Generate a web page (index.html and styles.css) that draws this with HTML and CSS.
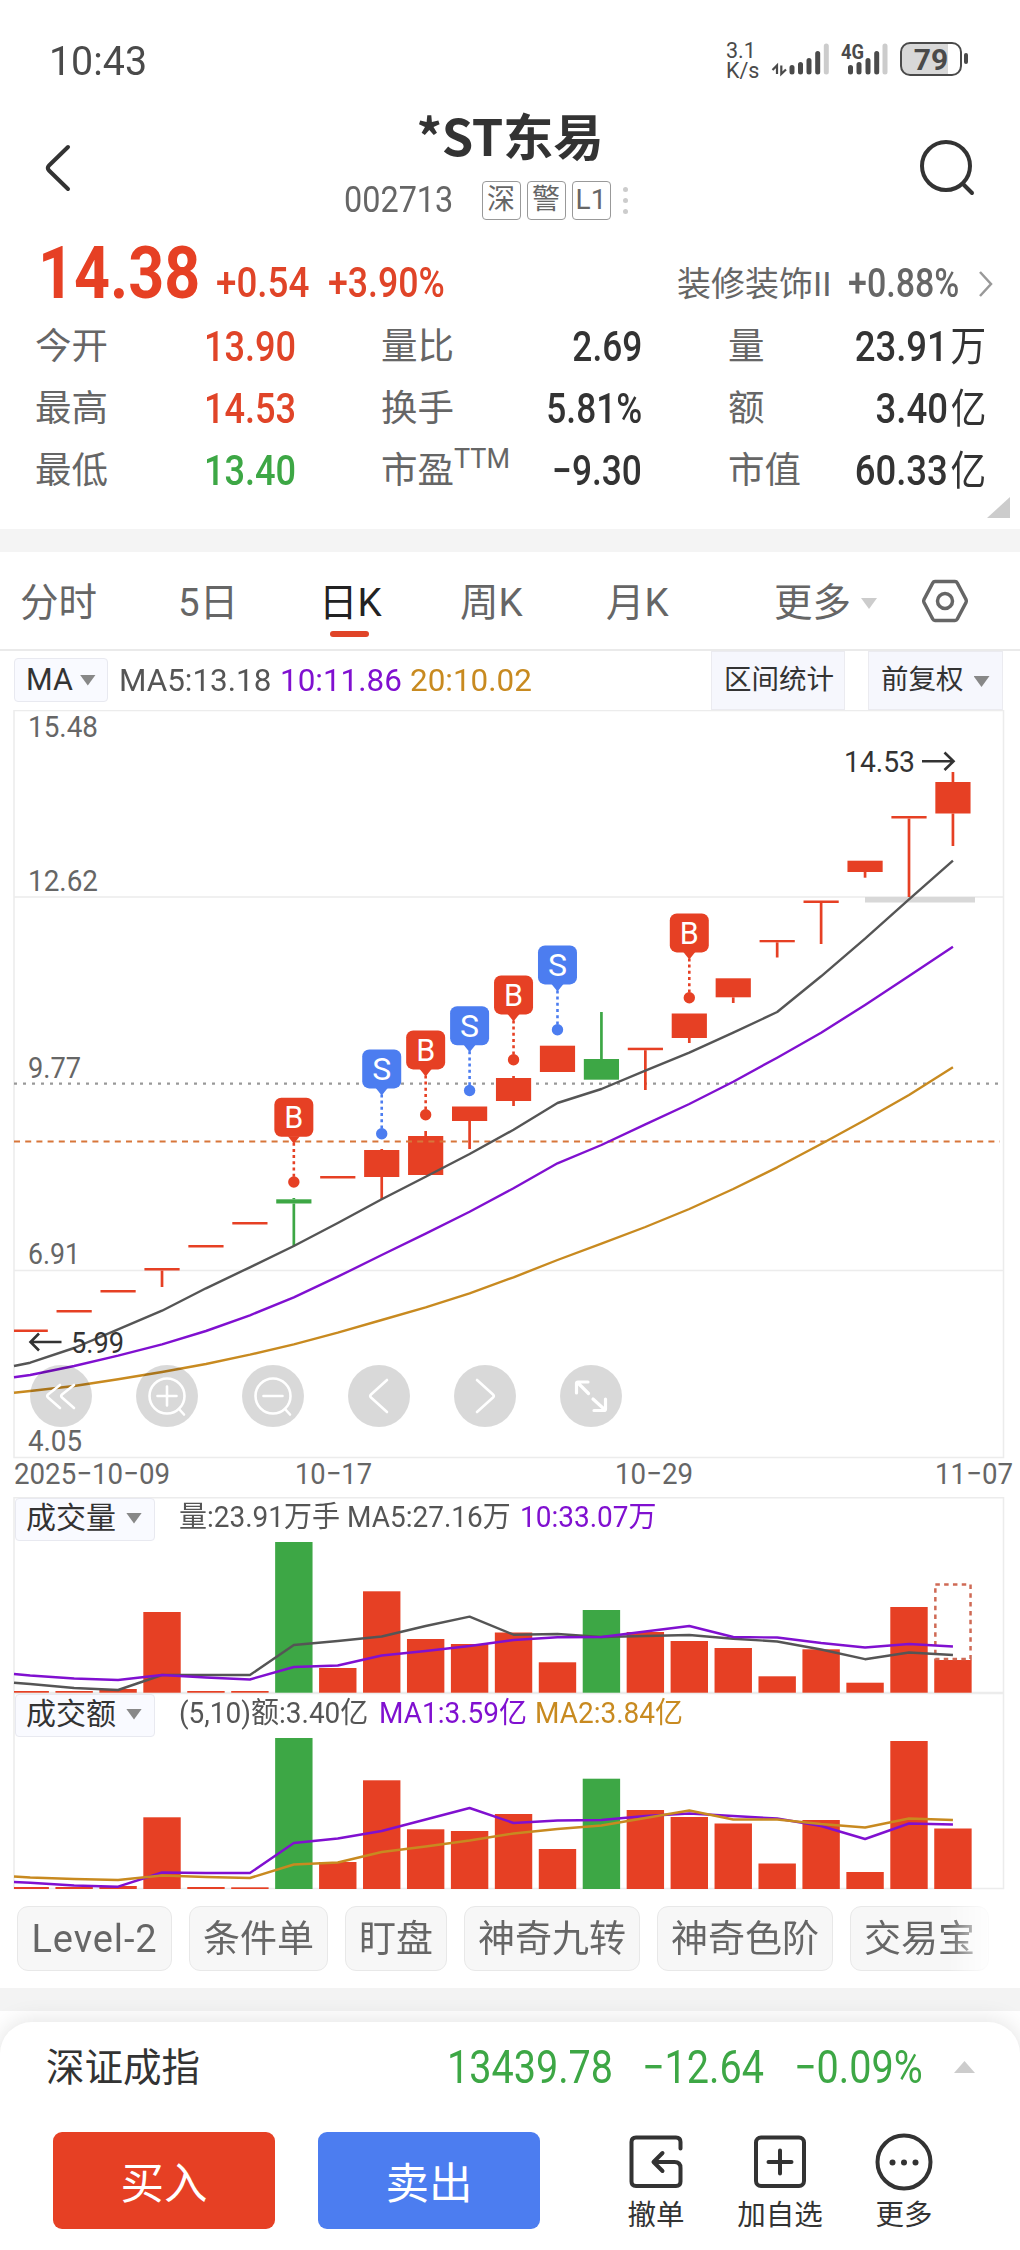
FILE: index.html
```html
<!DOCTYPE html>
<html lang="zh-CN">
<head>
<meta charset="utf-8">
<title>*ST东易 002713</title>
<link rel="stylesheet" href="styles.css">
</head>
<body>
<div class="page">
  <header class="status">
    <span class="clock">10:43</span>
    <div class="status-right">
      <div class="speed"><span>3.1</span><span>K/s</span></div>
      <svg class="signals" width="118" height="40" viewBox="768 38 118 40">
        <g stroke="#4a4a4a" stroke-width="5" stroke-linecap="round">
          <path d="M791 67.500V72M799.500 64.500V72M808 60.500V72M816.700 53.500V72M849.500 67.500V72M858 64.500V72M867 60.500V72M875.700 53.500V72"/>
          <path stroke="#ccc" d="M825.300 46V72M884 46V72"/>
        </g>
        <path fill="none" stroke="#4a4a4a" stroke-width="2.200" d="M771.500 70L776 65.500V74M780.300 65.500V74L785 69.500"/>
        <text x="840" y="59" class="net" textLength="23" lengthAdjust="spacingAndGlyphs">4G</text>
      </svg>
      <div class="battery"><span>79</span></div>
      <i class="battery-tip"></i>
    </div>
  </header>

  <div class="titlebar">
    <svg class="back" width="28" height="48" viewBox="0 0 28 48"><path d="M24 3L5 21.500Q2.500 24 5 26.500L24 45"/></svg>
    <div class="title">
      <h1>*ST东易</h1>
      <div class="sub">
        <span class="code">002713</span>
        <span class="tag">深</span><span class="tag">警</span><span class="tag">L1</span>
        <span class="dots"><i></i><i></i><i></i></span>
      </div>
    </div>
    <svg class="search" width="58" height="58" viewBox="0 0 58 58"><circle cx="27" cy="27" r="24"/><path d="M44 45L53 54"/></svg>
  </div>

  <div class="quote">
    <span class="price">14.38</span>
    <span class="chg">+0.54</span>
    <span class="chg pct">+3.90%</span>
    <span class="sector">装修装饰II</span>
    <span class="sector-pct">+0.88%</span>
    <svg width="16" height="28" viewBox="0 0 16 28"><path d="M2 2L13 14L2 26"/></svg>
  </div>

  <div class="stats">
    <span class="k">今开</span><b class="open red">13.90</b><span class="k">量比</span><b class="mid">2.69</b><span class="k">量</span><b>23.91<em>万</em></b>
    <span class="k">最高</span><b class="open red">14.53</b><span class="k">换手</span><b class="mid">5.81%</b><span class="k">额</span><b>3.40<em>亿</em></b>
    <span class="k">最低</span><b class="open green">13.40</b><span class="k">市盈<sup>TTM</sup></span><b class="mid">−9.30</b><span class="k">市值</span><b>60.33<em>亿</em></b>
  </div>
  <div class="expand"><i></i></div>
  <div class="band"></div>

  <nav class="tabs">
    <span>分时</span><span>5日</span><span class="on">日K</span><span>周K</span><span>月K</span><span class="more">更多<i class="tri light"></i></span>
    <svg width="48" height="46" viewBox="0 0 48 46"><path d="M14 3.500H34Q35.500 3.500 36.300 5L45 21.500Q45.700 23 45 24.500L36.300 41Q35.500 42.500 34 42.500H14Q12.500 42.500 11.700 41L3 24.500Q2.300 23 3 21.500L11.700 5Q12.500 3.500 14 3.500Z"/><circle cx="24" cy="23" r="7.500"/></svg>
  </nav>

  <div class="toolbar">
    <span class="pick">MA<i class="tri"></i></span>
    <span class="ma">MA5:13.18</span><span class="ma purple">10:11.86</span><span class="ma gold">20:10.02</span>
    <span class="opt range">区间统计</span>
    <span class="opt adj">前复权<i class="tri"></i></span>
  </div>

  <section class="panel">
    <svg id="kline" width="1020" height="787" viewBox="0 710 1020 787"></svg>
    <div class="controls">
      <span><svg viewBox="0 0 62 62"><path d="M30 20L18 29.500Q16.500 31 18 32.500L30 43M44 20L32 29.500Q30.500 31 32 32.500L44 43"/></svg></span>
      <span><svg viewBox="0 0 62 62"><circle cx="31" cy="31" r="17.500"/><path d="M21.500 31H40.500M31 21.500V40.500M43 44L48 49.500"/></svg></span>
      <span><svg viewBox="0 0 62 62"><circle cx="31" cy="31" r="17.500"/><path d="M21.500 31H40.500M43 44L48 49.500"/></svg></span>
      <span><svg viewBox="0 0 62 62"><path d="M39 15L23 29.500Q21.500 31 23 32.500L39 47"/></svg></span>
      <span><svg viewBox="0 0 62 62"><path d="M23 15L39 29.500Q40.500 31 39 32.500L23 47"/></svg></span>
      <span><svg viewBox="0 0 62 62"><path stroke-width="3.200" d="M16.500 28V18.500Q16.500 17 18 17H28M18 18L28.500 28.500M45.500 34V44Q45.500 45.500 44 45.500H34M44 44L33 34"/></svg></span>
    </div>
  </section>

  <section class="panel">
    <svg id="volume" width="1020" height="196" viewBox="0 1497 1020 196"></svg>
    <div class="panel-head"><span class="pick2">成交量<i class="tri"></i></span>
      <span class="legend v1">量:23.91万手</span><span class="legend v2">MA5:27.16万</span><span class="legend purple v3">10:33.07万</span></div>
  </section>
  <section class="panel">
    <svg id="amount" width="1020" height="197" viewBox="0 1693 1020 197"></svg>
    <div class="panel-head"><span class="pick2">成交额<i class="tri"></i></span>
      <span class="legend a1">(5,10)额:3.40亿</span><span class="legend purple a2">MA1:3.59亿</span><span class="legend gold a3">MA2:3.84亿</span></div>
  </section>

  <div class="pills">
    <span class="w155">Level-2</span><span class="w139">条件单</span><span class="w102">盯盘</span><span class="w176">神奇九转</span><span class="w176">神奇色阶</span><span class="w139">交易宝</span>
  </div>
  <div class="band low"></div>

  <footer class="sheet">
    <div class="index">
      <span class="name">深证成指</span><span class="iv">13439.78</span><span class="iv">−12.64</span><span class="iv">−0.09%</span><i class="up"></i>
    </div>
    <div class="actions">
      <button class="buy">买入</button><button class="sell">卖出</button>
      <div class="act"><svg viewBox="0 0 60 60"><path d="M54.500 16.500V10Q54.500 5.500 50 5.500H10Q5.500 5.500 5.500 10V49.500Q5.500 54 10 54H50Q54.500 54 54.500 49.500V36Q54.500 30 48.500 30H28M36.500 21L27.500 30L36.500 39"/></svg><span>撤单</span></div>
      <div class="act"><svg viewBox="0 0 60 60"><rect x="6" y="5.500" width="48" height="48.500" rx="5"/><path d="M30 18.500V41.500M18.500 30H41.500"/></svg><span>加自选</span></div>
      <div class="act"><svg viewBox="0 0 60 60"><circle cx="30" cy="30" r="26.500"/><g class="fill"><circle cx="18.500" cy="30.500" r="3"/><circle cx="30" cy="30.500" r="3"/><circle cx="41.500" cy="30.500" r="3"/></g></svg><span>更多</span></div>
    </div>
  </footer>
</div>
<script src="chart.js"></script>
</body>
</html>
```
FILE: styles.css
```css
* { box-sizing: border-box; }
body { margin: 0; background: #fff; color: #333; font-family: Roboto, "Noto Sans CJK SC", sans-serif; }
.page { width: 1020px; height: 2250px; overflow: hidden; display: flex; flex-direction: column; }
.page > * { flex: none; }
svg { display: block; fill: none; }
i, em { font-style: normal; }
.red { color: #e04428; }
.green { color: #3da745; }
.purple { color: #8010d0 !important; }
.gold { color: #c88a20 !important; }
.tri { display: inline-block; width: 16px; height: 11px; background: #888; clip-path: polygon(0 0, 100% 0, 50% 100%); }
.tri.light { background: #ccc; }

.status { height: 100px; padding: 37px 52px 0 49px; display: flex; justify-content: space-between; color: #4a4a4a; }
.clock { font-size: 41px; line-height: 48px; transform: scaleX(.96); transform-origin: left; }
.status-right { display: flex; }
.speed { width: 43px; display: flex; flex-direction: column; font-size: 21.500px; line-height: 20px; padding-top: 4px; }
.signals { margin-top: 1px; overflow: visible; }
.net { font: 700 20px Roboto; fill: #4a4a4a; }
.battery { margin: 5px 0 0 13px; width: 62px; height: 34px; border: 2.500px solid #4a4a4a; border-radius: 10px; background: linear-gradient(90deg, #d8d8d8 46px, #fff 46px); text-align: center; font: 700 30px/31px Roboto; }
.battery-tip { width: 4px; height: 11px; border-radius: 2px; background: #4a4a4a; margin: 16px 0 0 2px; }

.titlebar { height: 132px; padding: 0 44px; display: flex; justify-content: space-between; }
.back { margin-top: 44px; stroke: #333; stroke-width: 4; stroke-linecap: round; }
.search { margin: 39px -1px 0 0; stroke: #333; stroke-width: 4; stroke-linecap: round; }
.title { width: 700px; }
h1 { margin: 0 0 0 271px; font: 700 50.500px/68px "Noto Sans CJK SC", sans-serif; letter-spacing: -.3px; }
.sub { margin: 1px 0 0 198px; display: flex; align-items: center; height: 62px; gap: 6px; color: #666; }
.code { width: 132px; font-size: 36px; transform: scaleX(.9); transform-origin: left; }
.tag { width: 39px; height: 39px; border: 1.500px solid #999; border-radius: 4px; font-size: 28px; line-height: 35px; text-align: center; }
.dots { margin-left: 6px; display: flex; flex-direction: column; gap: 6px; }
.dots i { width: 5px; height: 5px; border-radius: 50%; background: #ccc; }

.quote { height: 83px; padding: 0 0 11px 38px; display: grid; grid-template-columns: 178px 112px 349px 171px 130px 16px; align-items: end; line-height: 1; color: #666; }
.quote span { transform-origin: left; white-space: nowrap; }
.price { margin-bottom: -6px; font-size: 73px; font-weight: 700; color: #e64024; transform: scaleX(.86); }
.chg { font-size: 42px; font-weight: 500; color: #e04428; transform: scaleX(.875); }
.pct { transform: scaleX(.85); }
.sector { font-size: 34px; margin-bottom: 3px; }
.sector-pct { font-size: 40px; font-weight: 500; transform: scaleX(.85); }
.quote svg { stroke: #999; stroke-width: 2.500; margin-bottom: 6px; }

.stats { height: 186px; padding: 1px 34px 0; display: grid; grid-template-rows: repeat(3, 62px); grid-template-columns: 170px 176px 191px 156px 117px 142px; }
.stats .k { padding-left: 1px; font-size: 36.500px; line-height: 62px; color: #666; white-space: nowrap; }
.stats b { font-size: 42px; font-weight: 500; line-height: 62px; white-space: nowrap; transform: scaleX(.87); transform-origin: right; justify-self: end; }
.stats b.open { transform: scaleX(.86); transform-origin: left; justify-self: start; }
.stats b.mid { margin-right: 85px; transform: scaleX(.84); }
.stats em { margin-left: 3px; font-size: 41px; font-weight: 400; line-height: 1; }
.stats sup { font-size: 27px; line-height: 0; vertical-align: 15px; }
.expand { height: 28px; padding: 0 10px; display: flex; justify-content: flex-end; }
.expand i { width: 23px; height: 21px; margin-top: -4px; background: #ccc; clip-path: polygon(100% 0, 100% 100%, 0 100%); }
.band { height: 23px; background: #f4f4f4; }

.tabs { height: 99px; border-bottom: 2px solid #eaeaea; padding-left: 20px; display: grid; grid-template-columns: 158px 141px 141px 146px 168px 147px 48px; font-size: 38.500px; line-height: 101px; color: #666; }
.tabs .on { color: #222; position: relative; }
.tabs .on::after { content: ""; position: absolute; left: 11px; top: 79px; width: 39px; height: 6px; border-radius: 3px; background: #e04428; }
.tabs .tri { margin-left: 10px; vertical-align: 7px; }
.tabs svg { margin-top: 26px; stroke: #666; stroke-width: 3.500; }

.toolbar { height: 59px; display: flex; align-items: flex-start; font-size: 30.500px; color: #555; white-space: nowrap; }
.pick { margin: 7px 0 0 14px; width: 94px; height: 44px; padding-left: 11px; background: #f9faff; border: 1.500px solid #e8e9f0; border-radius: 4px; line-height: 42px; color: #333; display: flex; align-items: center; gap: 7px; }
.ma { margin-top: 8px; line-height: 44px; width: 130px; transform: scaleX(1.03); transform-origin: left; }
.pick + .ma { margin-left: 11px; width: 161px; }
.toolbar .opt { height: 59px; background: #f6f7fd; border: 1.500px solid #ebebf0; font-size: 27.500px; line-height: 56px; color: #333; padding-left: 12px; }
.range { width: 134px; margin-left: auto; }
.adj { width: 135px; margin: 0 17px 0 23px; }
.adj .tri { margin-left: 10px; vertical-align: 2px; }

.panel { position: relative; }
.axis { font: 30px Roboto, sans-serif; fill: #666; }
.note { font: 30px Roboto, sans-serif; fill: #333; }
.flag { font: 31px Roboto, sans-serif; fill: #fff; text-anchor: middle; }
.controls { position: absolute; left: 30px; top: 655px; display: flex; gap: 44px; }
.controls span { width: 62px; height: 62px; border-radius: 50%; background: rgba(0, 0, 0, .15); }
.controls svg { stroke: #fff; stroke-width: 2.600; stroke-linecap: round; stroke-linejoin: round; }
.panel-head { position: absolute; left: 15px; top: 1px; display: flex; height: 43px; white-space: nowrap; color: #555; }
.pick2 { width: 140px; margin-right: 24px; padding-left: 10px; display: flex; align-items: center; gap: 10px; line-height: 38px; padding-bottom: 3px; background: #f9faff; border: 1.500px solid #e8e9f0; border-radius: 4px; color: #333; font-size: 30px; }
.legend { line-height: 39px; transform: scaleX(.965); transform-origin: left; font-size: 29px; }
.v1 { width: 168px; }
.v2 { width: 173px; }
.a1 { width: 200px; }
.a2 { width: 156px; }

.pills { height: 98px; padding: 16px 31px 0 17px; display: flex; gap: 17px; -webkit-mask: linear-gradient(90deg, #000 948px, rgba(0, 0, 0, .15) 989px); mask: linear-gradient(90deg, #000 948px, rgba(0, 0, 0, .15) 989px); }
.pills span { flex: none; height: 65px; border: 1.500px solid #e8e8e8; border-radius: 11px; background: #f7f7f7; color: #666; font-size: 37px; line-height: 65px; text-align: center; white-space: nowrap; }
.pills .w155 { width: 155px; font-size: 38px; letter-spacing: .9px; }
.w139 { width: 139px; }
.w102 { width: 102px; }
.w176 { width: 176px; }
.low { background: #f3f3f3; }

.sheet { margin-top: 11px; height: 228px; border-radius: 32px 32px 0 0; background: #fff; box-shadow: 0 0 24px rgba(0, 0, 0, .13); }
.index { height: 90px; padding-left: 46px; display: grid; grid-template-columns: 401px 195px 152px 160px 21px; align-items: center; }
.name { font-size: 38.500px; line-height: 56px; margin-top: 1px; color: #333; }
.iv { font-size: 46px; color: #3da745; transform: scaleX(.86); transform-origin: left; white-space: nowrap; }
.up { width: 21px; height: 12px; background: #ccc; clip-path: polygon(50% 0, 100% 100%, 0 100%); }
.actions { display: flex; padding: 20px 0 0 53px; }
button { border: 0; padding: 0; width: 222px; height: 97px; border-radius: 9px; color: #fff; font: 43.500px/95px "Noto Sans CJK SC", sans-serif; }
.buy { background: #e64024; margin-right: 43px; }
.sell { background: #4c7df0; margin-right: 54px; }
.act { width: 124px; display: flex; flex-direction: column; align-items: center; font-size: 28.500px; line-height: 38px; color: #333; white-space: nowrap; }
.act svg { width: 60px; height: 60px; stroke: #333; stroke-width: 4; stroke-linecap: round; stroke-linejoin: round; }
.act .fill { fill: #333; stroke: none; }
.act span { margin-top: 5px; }
```
FILE: chart.js
```js
const RED = '#e64024', GREEN = '#3da745', BLUE = '#4c7df0';
const DARK = '#555', PURPLE = '#8010d0', GOLD = '#c88a20', GRID = '#ececec';
const cx = i => 30.2 + 43.94 * i;
const rect = (x, y, w, h, f, extra = '') => `<rect x="${x}" y="${y}" width="${w}" height="${h}" fill="${f}" ${extra}/>`;
const line = (x1, y1, x2, y2, s, w, extra = '') => `<path d="M${x1} ${y1}L${x2} ${y2}" stroke="${s}" stroke-width="${w}" ${extra}/>`;
const label = (x, y, w, s, c = 'axis') => `<text x="${x}" y="${y}" class="${c}" textLength="${w}" lengthAdjust="spacingAndGlyphs">${s}</text>`;
// First value is the height where the series enters the frame, left of the first bar.
const series = (ys, color) => `<path fill="none" stroke="${color}" stroke-width="2.4" stroke-linejoin="round" d="M14 ${ys[0]}` +
  ys.slice(1).map((y, i) => `L${cx(i)} ${y}`).join('') + '"/>';

// [body top, body bottom, high, low, colour]
const candles = [
  [1329.5, 1332, 0, 0], [1310, 1312.5, 0, 0], [1290, 1292.5, 0, 0], [1268, 1270.5, 0, 1287], [1245, 1247.5, 0, 0],
  [1222, 1224.5, 0, 0], [1199.3, 1203.5, 1198, 1246, GREEN], [1176, 1178.5, 0, 0], [1150, 1177, 1149, 1199],
  [1136, 1175, 1131, 0], [1106.5, 1121, 0, 1149], [1078, 1101, 1076, 1106], [1045.7, 1072, 0, 0],
  [1059, 1079.7, 1012, 0, GREEN], [1047.7, 1050.2, 0, 1090], [1013.5, 1038, 0, 1043], [978.3, 997.3, 0, 1003],
  [940, 942.3, 0, 957.5], [900.5, 903, 0, 944], [860.7, 872, 0, 877.7], [816, 818.5, 0, 897], [782, 813.5, 772, 846]
];
const flags = [[6, 'B', 1182], [8, 'S', 1133.7], [9, 'B', 1114.7], [10, 'S', 1090.5], [11, 'B', 1059.7], [12, 'S', 1029.7], [15, 'B', 997.7]];

let k = `<path fill="none" stroke="${GRID}" stroke-width="1.5" d="M14 710.5H1003.500V1457.500H14Z M14 897H1003 M14 1270.500H1003"/>`;
k += line(14, 1083.7, 1000, 1083.7, '#999', 2.2, 'stroke-dasharray="3 6"');
k += rect(865, 897, 110, 5.5, '#d8d8d8');
candles.forEach(([t, b, hi, lo, c = RED], i) => {
  const x = Math.max(14, cx(i) - 17.6);
  k += rect(x, t, cx(i) + 17.6 - x, b - t, c);
  if (hi) k += line(cx(i), hi, cx(i), t, c, 2.7);
  if (lo) k += line(cx(i), b, cx(i), lo, c, 2.7);
});
k += line(14, 1141.5, 1000, 1141.5, '#d8763a', 2.2, 'stroke-dasharray="6 5.2"');
k += series([1366, 1362.7, 1348, 1329.3, 1310.7, 1288.3, 1267.3, 1246, 1223, 1199.3, 1176.7, 1154, 1129.7, 1103, 1089, 1070.7, 1052.7, 1032.7, 1012, 976.3, 938.7, 899.3, 860.7], DARK);
k += series([1377.3, 1375, 1366, 1355.7, 1344.3, 1331, 1315.3, 1297.3, 1276.7, 1255, 1233.7, 1211.7, 1188.3, 1163.3, 1145, 1124.3, 1104, 1081.7, 1057.7, 1032.7, 1005, 976, 946.7], PURPLE);
k += series([1392.7, 1391, 1386, 1379.3, 1372, 1364, 1354.7, 1344.3, 1332.7, 1320, 1307.3, 1293.3, 1277.3, 1260, 1243.7, 1227, 1209, 1189, 1167.3, 1144, 1120, 1095, 1067.3], GOLD);
flags.forEach(([i, s, y]) => {
  const c = s === 'B' ? RED : BLUE, x = cx(i), t = y - 84.3;
  k += line(x, t + 45, x, y, c, 2.6, 'stroke-dasharray="3 3.2"');
  k += `<circle cx="${x}" cy="${y}" r="5.7" fill="${c}"/>`;
  k += rect(x - 19.5, t, 39, 39, c, 'rx="7"') + `<path fill="${c}" d="M${x - 6} ${t + 38.5}L${x} ${t + 46}L${x + 6} ${t + 38.5}Z"/>`;
  k += `<text x="${x}" y="${t + 30.5}" class="flag" textLength="19" lengthAdjust="spacingAndGlyphs">${s}</text>`;
});
[['15.48', 737, 70], ['12.62', 891, 70], ['9.77', 1077.5, 53], ['6.91', 1264, 52], ['4.05', 1450.5, 54]].forEach(([s, y, w]) => k += label(28, y, w, s));
k += label(844, 771.5, 71, '14.53', 'note') + label(71, 1353, 53, '5.99', 'note');
k += '<path fill="none" stroke="#333" stroke-width="2.6" d="M922 761.300H953M944.500 752.500L953.500 761.300L944.500 770M61.500 1342H31M39 1333.500L30.500 1342L39 1350.500"/>';
k += label(14, 1484, 156, '2025−10−09') + label(295, 1484, 77, '10−17') + label(615, 1484, 78, '10−29') + label(935, 1484, 78, '11−07');
document.getElementById('kline').innerHTML = k;

const bars = (tops, base) => tops.map((t, i) => {
  const x = Math.max(14, cx(i) - 18.7);
  return rect(x, t, cx(i) + 18.7 - x, base - t, i === 6 || i === 13 ? GREEN : RED);
}).join('');

document.getElementById('volume').innerHTML =
  `<path fill="none" stroke="${GRID}" stroke-width="1.5" d="M14 1693V1497.700H1003.500V1693"/>` +
  line(14, 1692.6, 1003, 1692.6, GRID, 1.5) +
  bars([1691, 1691, 1689, 1612, 1691, 1691, 1542, 1668, 1591.3, 1639, 1644, 1632.5, 1662.3, 1610, 1632, 1641, 1648, 1676.3, 1649.3, 1682.7, 1607, 1660], 1692.7) +
  rect(cx(21) - 17.6, 1584.5, 35.2, 74.5, 'none', 'stroke="#cf6a55" stroke-width="2.500" stroke-dasharray="4.500 4.300"') +
  series([1682.7, 1684, 1688, 1690, 1675, 1675, 1675, 1645, 1641, 1636.5, 1626, 1616.7, 1634.7, 1634, 1637, 1636, 1635, 1638.7, 1641.5, 1649.5, 1659.2, 1652.5, 1655], DARK) +
  series([1674, 1675.5, 1678.5, 1680, 1675, 1677.5, 1679.5, 1667, 1665.5, 1655.5, 1651, 1646, 1640, 1637.3, 1637, 1631.5, 1626, 1637, 1637.5, 1643, 1647.5, 1644, 1646.5], PURPLE);

document.getElementById('amount').innerHTML =
  `<path fill="none" stroke="${GRID}" stroke-width="1.5" d="M14 1693.500H1003.500V1888.500H14Z"/>` +
  bars([1887, 1887, 1886, 1817.3, 1887, 1887.3, 1738, 1862, 1780.3, 1829.3, 1831, 1814, 1849, 1778.7, 1810, 1817, 1823.5, 1863.5, 1820, 1872, 1741, 1828.5], 1889) +
  series([1882, 1882.7, 1885.5, 1886.7, 1872.5, 1873, 1873, 1843, 1838.5, 1831, 1819.5, 1808, 1823, 1820.5, 1820, 1816, 1813.5, 1816, 1818.5, 1826, 1839, 1823.5, 1824.5], PURPLE) +
  series([1876.5, 1877.5, 1879, 1880, 1875.5, 1877, 1878, 1864.5, 1862.5, 1852, 1846.5, 1840.5, 1833.5, 1829, 1825.5, 1818, 1810.5, 1819.5, 1819.5, 1824, 1827.5, 1818.5, 1820], GOLD);
```
